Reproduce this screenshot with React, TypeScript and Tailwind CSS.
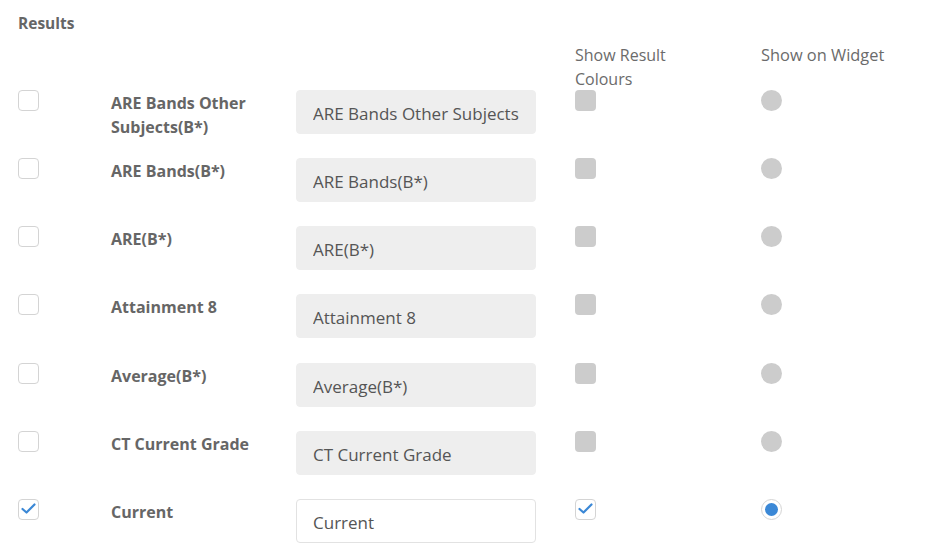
import React from "react";

type Row = {
  label: string;
  value: string;
  enabled: boolean;
};

const rows: Row[] = [
  { label: "ARE Bands Other Subjects(B*)", value: "ARE Bands Other Subjects(B*)", enabled: false },
  { label: "ARE Bands(B*)", value: "ARE Bands(B*)", enabled: false },
  { label: "ARE(B*)", value: "ARE(B*)", enabled: false },
  { label: "Attainment 8", value: "Attainment 8", enabled: false },
  { label: "Average(B*)", value: "Average(B*)", enabled: false },
  { label: "CT Current Grade", value: "CT Current Grade", enabled: false },
  { label: "Current", value: "Current", enabled: true },
];

const Check = () => (
  <svg width="15" height="12" viewBox="0 0 15 12" fill="none">
    <path d="M1.5 6 L5.5 9.5 L13.5 1.5" stroke="#3b88d6" strokeWidth="2.2" strokeLinecap="round" strokeLinejoin="round" />
  </svg>
);

const Box = ({ checked, disabled }: { checked?: boolean; disabled?: boolean }) =>
  disabled ? (
    <span className="block w-[21px] h-[21px] rounded-[4px] bg-[#cccccc]" />
  ) : (
    <span className="flex w-[21px] h-[21px] items-center justify-center rounded-[4px] border border-[#d4d4d4] bg-white">
      {checked && <Check />}
    </span>
  );

const Radio = ({ checked, disabled }: { checked?: boolean; disabled?: boolean }) =>
  disabled ? (
    <span className="block w-[21px] h-[21px] rounded-full bg-[#cccccc]" />
  ) : (
    <span className="flex w-[21px] h-[21px] items-center justify-center rounded-full border border-[#d4d4d4] bg-white">
      {checked && <span className="block w-[13px] h-[13px] rounded-full bg-[#3b88d6]" />}
    </span>
  );

export default function App() {
  return (
    <div className="w-[942px] h-[544px] overflow-hidden bg-white text-[#666666] pl-[18px] pt-[12px]" style={{ fontFamily: '"Open Sans", "Liberation Sans", sans-serif' }}>
      <h3 className="text-[15.5px] font-bold leading-[22px] text-[#666666]">Results</h3>

      <div className="grid grid-cols-[93px_185px_240px_39px_186px_1fr] mt-[9px]">
        <div className="col-start-5 text-[16px] leading-[24px] text-[#6b6b6b]">
          Show Result
          <br />
          Colours
        </div>
        <div className="col-start-6 text-[16.4px] leading-[24px] text-[#6b6b6b]">Show on Widget</div>
      </div>

      <div className="flex flex-col gap-[24.17px] mt-[-1px]">
        {rows.map((row) => (
          <div key={row.label} className="grid grid-cols-[93px_185px_240px_39px_186px_1fr] h-[44px]">
            <div>
              <Box checked={row.enabled} />
            </div>
            <div className="pt-[1px] text-[16px] font-bold leading-[24px] text-[#666666] pr-2">{row.label}</div>
            <input
              readOnly
              disabled={!row.enabled}
              value={row.value}
              className={
                "h-[44px] w-[240px] rounded-[4px] px-[16px] pt-[3px] text-[17px] text-[#555555] outline-none " +
                (row.enabled ? "bg-white border border-[#e2e2e2]" : "bg-[#eeeeee] border border-[#eeeeee]")
              }
            />
            <div />
            <div>
              <Box checked={row.enabled} disabled={!row.enabled} />
            </div>
            <div>
              <Radio checked={row.enabled} disabled={!row.enabled} />
            </div>
          </div>
        ))}
      </div>
    </div>
  );
}
